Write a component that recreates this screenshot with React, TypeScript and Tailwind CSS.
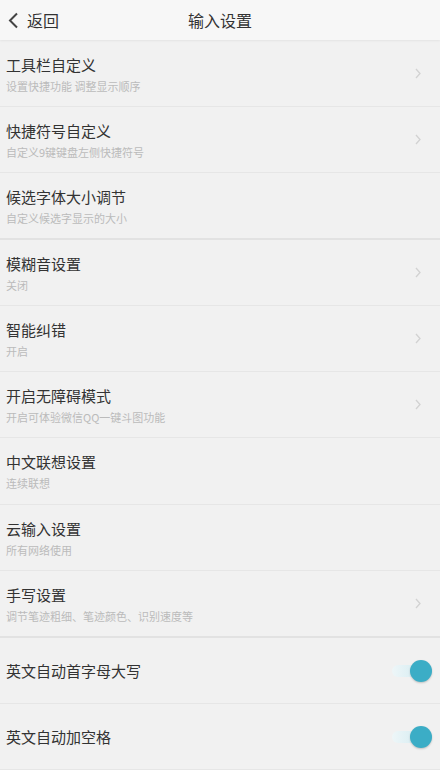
import React from "react";

type Item = { title: string; sub?: string; chevron?: boolean; toggle?: boolean; section?: boolean; tall?: boolean };

const items: Item[] = [
  { title: "工具栏自定义", sub: "设置快捷功能 调整显示顺序", chevron: true },
  { title: "快捷符号自定义", sub: "自定义9键键盘左侧快捷符号", chevron: true },
  { title: "候选字体大小调节", sub: "自定义候选字显示的大小", section: true },
  { title: "模糊音设置", sub: "关闭", chevron: true },
  { title: "智能纠错", sub: "开启", chevron: true },
  { title: "开启无障碍模式", sub: "开启可体验微信QQ一键斗图功能", chevron: true },
  { title: "中文联想设置", sub: "连续联想", tall: true },
  { title: "云输入设置", sub: "所有网络使用" },
  { title: "手写设置", sub: "调节笔迹粗细、笔迹颜色、识别速度等", chevron: true, section: true },
  { title: "英文自动首字母大写", toggle: true },
  { title: "英文自动加空格", toggle: true },
];

function Chevron() {
  return (
    <svg width="6" height="11" viewBox="0 0 6 11" className="mr-[19px]">
      <path d="M1 1 L5 5.5 L1 10" fill="none" stroke="#d2d2d2" strokeWidth="1.3" />
    </svg>
  );
}

function Toggle() {
  return (
    <div className="relative mr-[8px] h-[22px] w-[42px]">
      <div className="absolute left-[2px] top-[5px] h-[12px] w-[34px] rounded-full bg-gradient-to-r from-[#eef6f8] to-[#cfeaf0]" />
      <div className="absolute right-0 top-0 h-[22px] w-[22px] rounded-full bg-[#3badc6] shadow-[0_1px_2px_rgba(0,0,0,0.2)]" />
    </div>
  );
}

export default function App() {
  return (
    <div
      className="w-[440px] h-[770px] overflow-hidden bg-[#f1f1f1]"
      style={{ fontFamily: '"Noto Sans CJK SC", "Noto Sans", sans-serif' }}
    >
      <div className="relative flex h-[40px] items-center bg-[#f7f7f7] shadow-[0_1px_2px_rgba(0,0,0,0.06)]">
        <div className="flex items-center pl-[8px]">
          <svg width="11" height="17" viewBox="0 0 11 17">
            <path d="M9 1.5 L2 8.5 L9 15.5" fill="none" stroke="#444" strokeWidth="2" />
          </svg>
          <span className="ml-[8px] text-[16px] leading-[20px] text-[#333]">返回</span>
        </div>
        <div className="absolute inset-x-0 top-0 flex h-[40px] items-center justify-center text-[16px] text-[#333] pointer-events-none">
          输入设置
        </div>
      </div>
      <div className="h-[1px]" />
      {items.map((it, i) => (
        <div
          key={i}
          className={`flex items-center justify-between ${
            it.section ? "h-[67px] border-b-2 border-[#e2e2e2]" : it.tall ? "h-[67px] border-b border-[#e6e6e6]" : "h-[66px] border-b border-[#e6e6e6]"
          }`}
        >
          <div className="flex flex-col pl-[6px]">
            <div className="text-[15px] leading-[20px] text-[#333]">{it.title}</div>
            {it.sub && <div className="mt-[4px] text-[11px] leading-[14px] text-[#bbbbbb]">{it.sub}</div>}
          </div>
          {it.chevron && <Chevron />}
          {it.toggle && <Toggle />}
        </div>
      ))}
    </div>
  );
}
